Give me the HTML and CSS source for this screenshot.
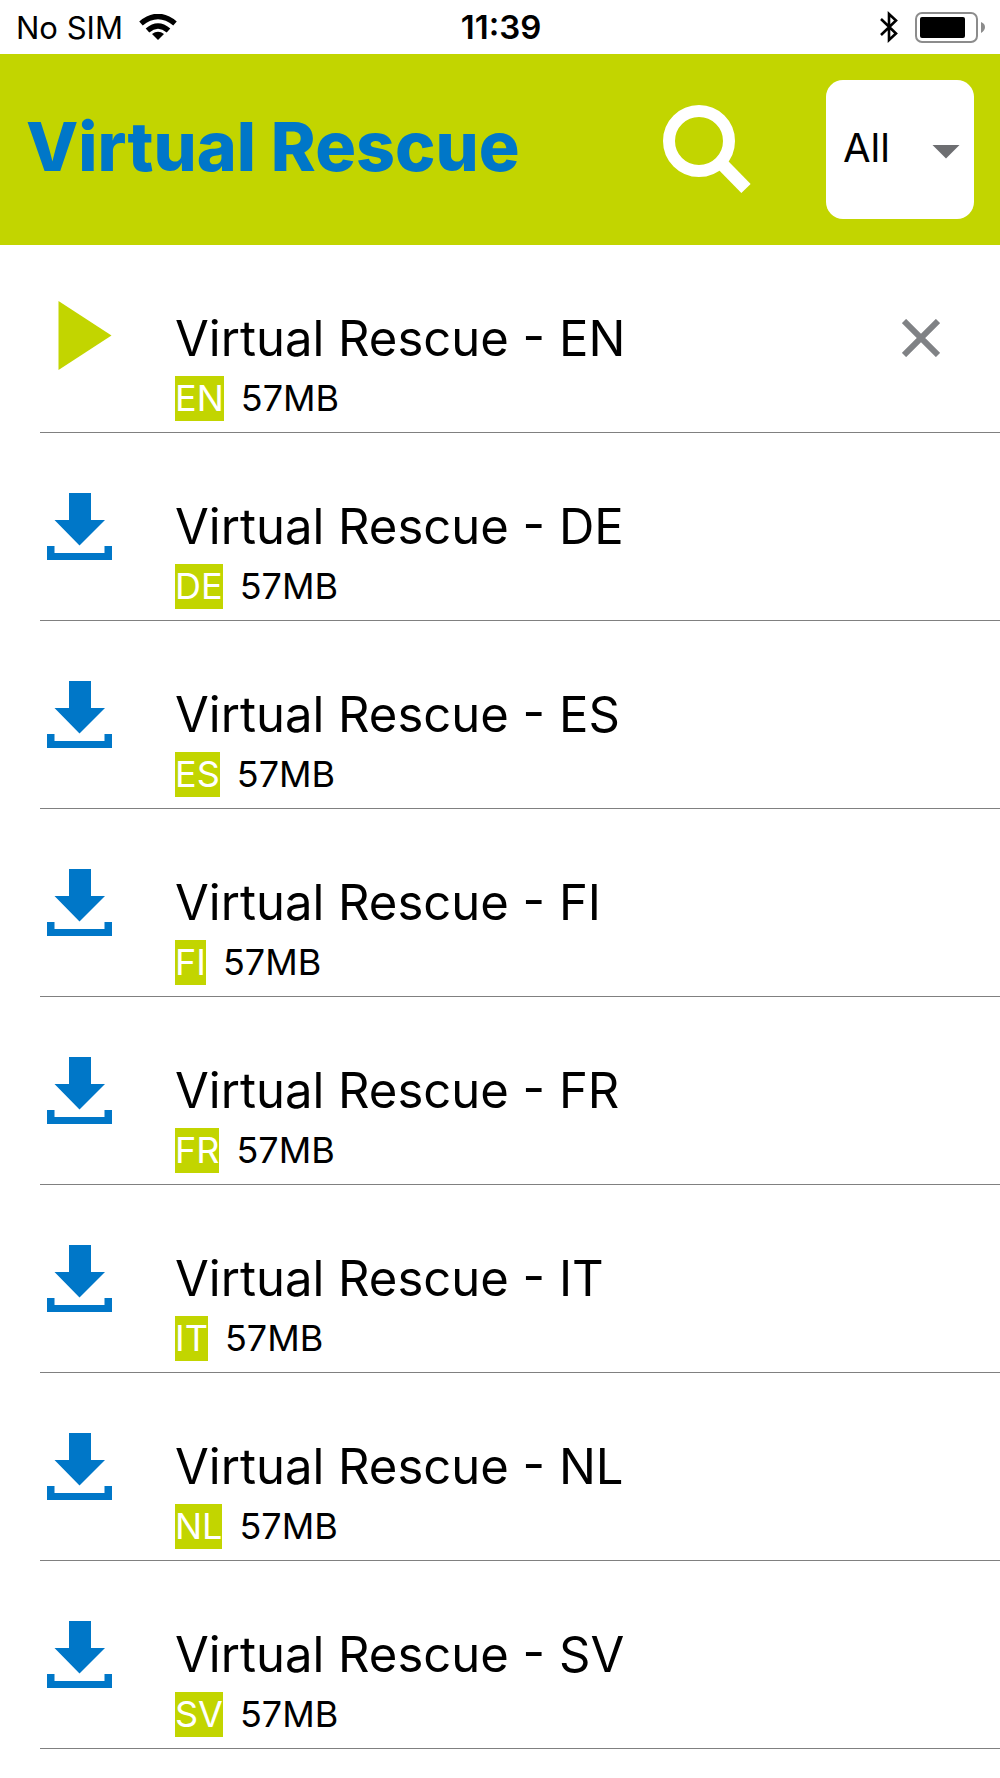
FILE: index.html
```html
<!DOCTYPE html>
<html lang="en">
<head>
<meta charset="utf-8">
<meta name="viewport" content="width=device-width, initial-scale=1">
<title>Virtual Rescue</title>
<link rel="stylesheet" href="styles.css">
</head>
<body>
<svg class="sprite" aria-hidden="true">
  <symbol id="download" viewBox="0 0 65 67">
    <path d="M22 0h22v27h14L32.500 52.500 7.500 27H22zM0 53h7.500v7H57.500v-7H65v14H0z"/>
  </symbol>
</svg>
<div class="status">
  <div class="carrier">
    <span>No SIM</span>
    <svg width="38" height="26" viewBox="0 0 38 26" aria-label="Wi-Fi">
      <g fill="none" stroke="#000" stroke-width="5.500">
        <path d="M2 9.500Q19-4.500 36 9.500"/>
        <path d="M8.500 16.500Q19 7.500 29.500 16.500"/>
      </g>
      <path d="M19 26l-6-6q6-4.500 12 0z"/>
    </svg>
  </div>
  <time class="clock">11:39</time>
  <div class="power">
    <svg width="18" height="32" viewBox="0 0 18 32" aria-label="Bluetooth">
      <path d="M1 8l15 14.500L9 29V3l7 6.500L1 24" fill="none" stroke="#000" stroke-width="2.600"/>
    </svg>
    <svg width="72" height="32" viewBox="0 0 72 32" aria-label="Battery">
      <rect x="2" y="2" width="61" height="29" rx="6" fill="none" stroke="#8c8c8c" stroke-width="2"/>
      <rect x="6" y="6" width="45" height="21" rx="2"/>
      <path d="M67 11q4 1.500 4 5t-4 6z" fill="#8c8c8c"/>
    </svg>
  </div>
</div>
<header class="bar">
  <h1 class="brand">Virtual Rescue</h1>
  <button class="icon-button search" aria-label="Search">
    <svg width="90" height="90" viewBox="0 0 90 90">
      <circle cx="37" cy="36" r="30" fill="none" stroke="#fff" stroke-width="12"/>
      <path d="M61 60L84 83.500" stroke="#fff" stroke-width="13"/>
    </svg>
  </button>
  <label class="filter">
    <select aria-label="Language"><option>All</option><option>EN</option><option>DE</option><option>ES</option><option>FI</option><option>FR</option><option>IT</option><option>NL</option><option>SV</option></select>
  </label>
</header>
<main>
  <ul class="list">
    <li class="row">
      <button class="icon-button action" aria-label="Play EN"><svg class="play" width="65" height="69" viewBox="0 0 65 69"><path d="M11.500 0v69L64.500 34.500z"/></svg></button>
      <div class="info"><h2>Virtual Rescue - EN</h2><p><span class="tag">EN</span><span>57MB</span></p></div>
      <button class="icon-button remove" aria-label="Remove EN"><svg width="38" height="38" viewBox="0 0 38 38"><path d="M2 2l34 34M36 2L2 36" stroke="#808285" stroke-width="6"/></svg></button>
    </li>
    <li class="row">
      <button class="icon-button action" aria-label="Download DE"><svg width="65" height="67"><use href="#download"/></svg></button>
      <div class="info"><h2>Virtual Rescue - DE</h2><p><span class="tag">DE</span><span>57MB</span></p></div>
    </li>
    <li class="row">
      <button class="icon-button action" aria-label="Download ES"><svg width="65" height="67"><use href="#download"/></svg></button>
      <div class="info"><h2>Virtual Rescue - ES</h2><p><span class="tag">ES</span><span>57MB</span></p></div>
    </li>
    <li class="row">
      <button class="icon-button action" aria-label="Download FI"><svg width="65" height="67"><use href="#download"/></svg></button>
      <div class="info"><h2>Virtual Rescue - FI</h2><p><span class="tag">FI</span><span>57MB</span></p></div>
    </li>
    <li class="row">
      <button class="icon-button action" aria-label="Download FR"><svg width="65" height="67"><use href="#download"/></svg></button>
      <div class="info"><h2>Virtual Rescue - FR</h2><p><span class="tag">FR</span><span>57MB</span></p></div>
    </li>
    <li class="row">
      <button class="icon-button action" aria-label="Download IT"><svg width="65" height="67"><use href="#download"/></svg></button>
      <div class="info"><h2>Virtual Rescue - IT</h2><p><span class="tag">IT</span><span>57MB</span></p></div>
    </li>
    <li class="row">
      <button class="icon-button action" aria-label="Download NL"><svg width="65" height="67"><use href="#download"/></svg></button>
      <div class="info"><h2>Virtual Rescue - NL</h2><p><span class="tag">NL</span><span>57MB</span></p></div>
    </li>
    <li class="row">
      <button class="icon-button action" aria-label="Download SV"><svg width="65" height="67"><use href="#download"/></svg></button>
      <div class="info"><h2>Virtual Rescue - SV</h2><p><span class="tag">SV</span><span>57MB</span></p></div>
    </li>
  </ul>
</main>
</body>
</html>
```

FILE: styles.css
```css
:root {
  --lime: #c2d500;
  --blue: #0077c8;
}

* { box-sizing: border-box; }

body {
  margin: 0;
  background: #fff;
  color: #000;
  font-family: Inter, "Liberation Sans", sans-serif;
}

h1, h2, p, ul { margin: 0; padding: 0; }

svg { display: block; }

.sprite { display: none; }

.icon-button {
  padding: 0;
  border: 0;
  background: none;
}

/* Device status line */
.status {
  display: grid;
  grid-template-columns: 1fr auto 1fr;
  align-items: center;
  height: 54px;
  padding: 0 14px 0 16px;
  font-size: 31px;
}

.carrier, .power {
  display: flex;
  align-items: center;
  gap: 16px;
}

.power { justify-content: flex-end; }

.clock {
  font-size: 33px;
  font-weight: 600;
}

/* Header */
.bar {
  display: flex;
  align-items: center;
  height: 191px;
  padding: 0 26px;
  background: var(--lime);
}

.brand {
  flex: 1;
  padding-bottom: 8px;
  color: var(--blue);
  font-size: 68px;
  font-weight: 800;
  line-height: 80px;
  white-space: nowrap;
}

.search { margin-right: 74px; }

.filter {
  display: grid;
  align-items: center;
  width: 148px;
  height: 139px;
}

.filter select {
  grid-area: 1 / 1;
  width: 100%;
  height: 100%;
  padding: 0 17px 4px;
  border: 0;
  border-radius: 17px;
  background: #fff;
  color: #000;
  font: 40px Inter, sans-serif;
  appearance: none;
}

.filter::after {
  content: "";
  grid-area: 1 / 1;
  z-index: 1;
  justify-self: end;
  width: 28px;
  height: 14px;
  margin: 4px 14px 0 0;
  background: #6d6e71;
  clip-path: polygon(0 0, 100% 0, 50% 100%);
  pointer-events: none;
}

/* Scenario list */
.list {
  margin-left: 40px;
  list-style: none;
}

.row {
  display: flex;
  align-items: flex-start;
  height: 188px;
  padding: 60px 60px 0 7px;
  border-bottom: 1px solid #808080;
}

.action {
  margin-right: 63px;
  fill: var(--blue);
}

.play {
  margin-top: -4px;
  fill: var(--lime);
}

.info { flex: 1; }

.info h2 {
  font-size: 49px;
  font-weight: 400;
  line-height: 68px;
}

.info p {
  display: flex;
  gap: 17px;
  margin-top: 3px;
  font-size: 36px;
  line-height: 45px;
}

.tag {
  background: var(--lime);
  color: #fff;
}

.remove { margin-top: 14px; }
```
